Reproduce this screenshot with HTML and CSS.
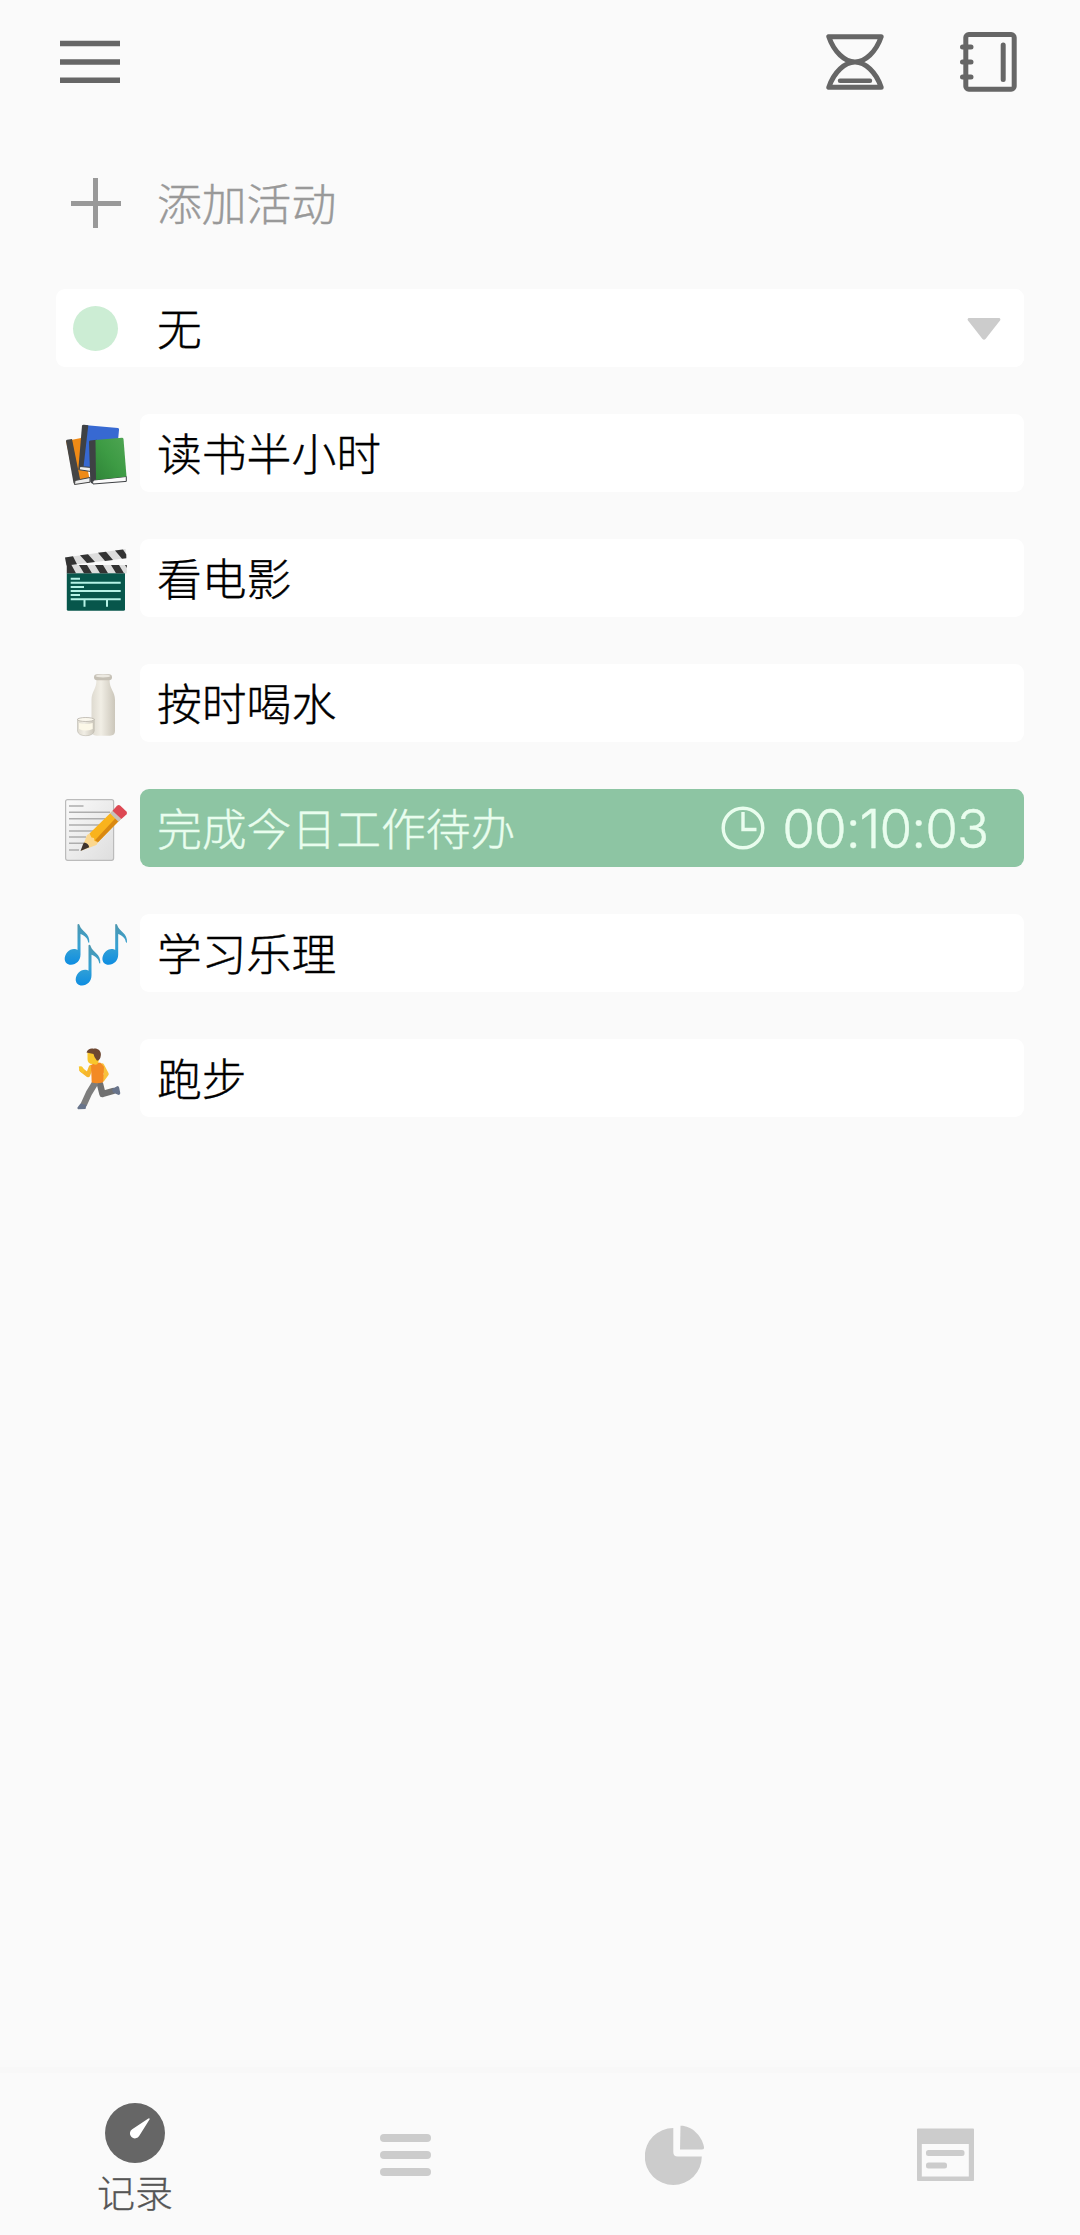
FILE: index.html
```html
<!DOCTYPE html>
<html lang="zh-CN">
<head>
  <meta charset="UTF-8" />
  <meta name="viewport" content="width=device-width, initial-scale=1.0"/>
  <title>记录</title>
  <link rel="stylesheet" href="styles.css">
</head>
<body>
  <header class="topbar">
    <svg class="menu-icon" viewBox="0 0 60 60" stroke="#666" stroke-width="5.5">
      <path d="M0 11.5h60M0 30h60M0 48.3h60"/>
    </svg>
    <div class="topbar-right">
      <svg class="top-icon" viewBox="0 0 60 60" fill="none" stroke="#666" stroke-width="5" stroke-linecap="round" stroke-linejoin="round">
        <path d="M3.8 4.7H56.2C51 20 40 30 30 30S9 20 3.8 4.7zM3.8 55.3H56.2C51 40 40 30 30 30S9 40 3.8 55.3z"/>
        <path d="M15 48.7H45" stroke-width="4.4"/>
      </svg>
      <svg class="top-icon" viewBox="0 0 60 60" fill="none" stroke="#666" stroke-width="5" stroke-linecap="round">
        <rect x="6.8" y="2.6" width="48.4" height="54.6" rx="3"/>
        <path d="M3.5 15h8.5M3.5 30h8.5M3.5 45h8.5M44.2 13v34.5"/>
      </svg>
    </div>
  </header>

  <main class="list">
    <div class="row add-row">
      <div class="icon-cell">
        <svg class="plus" viewBox="0 0 50 50" stroke="#999" stroke-width="5"><path d="M0 25.5h50M24.500 0v50"/></svg>
      </div>
      <div class="bar">添加活动</div>
    </div>

    <div class="row group-row">
      <div class="icon-cell"><span class="dot"></span></div>
      <div class="bar">
        <span>无</span>
        <svg class="caret" viewBox="0 0 34 22" fill="#ccc"><path d="M1.5 0h31q1.500 1 .5 2.500L18.500 21q-1.500 1.500-3 0L1 2.500Q0 1 1.500 0z"/></svg>
      </div>
    </div>

    <div class="row">
      <div class="icon-cell">
        <!-- books -->
        <svg class="emoji" viewBox="0 0 64 64">
          <defs>
            <linearGradient id="cover" x1="0" y1="1" x2="1" y2="0"><stop offset="0" stop-color="#2f8438"/><stop offset=".5" stop-color="#3d9b44"/><stop offset="1" stop-color="#4fa553"/></linearGradient>
          </defs>
          <path fill="#ef8a16" d="M2 18l15-3 9 43-15 3z"/>
          <path fill="#454545" d="M2 18q0-1 1-1.300l5-.7 8 40-5 5q-1 0-1.500-1z"/>
          <path fill="#eee" stroke="#454545" stroke-width="1" d="M11 57.500l15-3v4.700l-15.500 2.300z"/>
          <path fill="#3769d2" d="M20 2l34 3q1.500.5 1 2l-4 42-34-2z"/>
          <path fill="#3e4144" d="M18 2.500q.5-1 2-.8l4.300.6-5 43.500-5 1z"/>
          <path fill="#eee" stroke="#3e4144" stroke-width="1" d="M16 43.500l12 1v4.200l-13-2z"/>
          <path fill="#3e4144" d="M26 17.600l7-.8 3 42-8 1.700q-1.400-.3-1.700-2L25 19q0-1.200 1-1.400z"/>
          <path fill="#fafafa" stroke="#3e4144" stroke-width="1" d="M30 57l32.300-3.500v4.900L29 61q-1.500-2 1-4z"/>
          <path fill="url(#cover)" d="M31.500 17L58 14.700q1.300 0 1.500 1.300l3 37.500-30.500 3.400z"/>
        </svg>
      </div>
      <div class="bar">读书半小时</div>
    </div>

    <div class="row">
      <div class="icon-cell">
        <!-- clapper board -->
        <svg class="emoji" viewBox="0 0 64 64">
          <rect x="2.800" y="24" width="58.200" height="38.700" rx="1.500" fill="#07564b"/>
          <path fill="#ddd" d="M1 9.500L61.500 1l.8 9.300L2.500 17.500z"/>
          <path fill="#333" d="M1 9.500l8-1.200 4 7.900-10.500 1.300zM16 7.300l8-1.100 7 7.900-8 1zM34 4.800l8-1.100 7 8.200-8 1zM51 2.500l8-1.100 3.300 5.200v3.700l-4.300.5z"/>
          <rect x="2.800" y="17" width="60" height="8.300" fill="#ddd"/>
          <path fill="#333" d="M2.800 17h4.700l4.500 8.300H2.800zM15 17h8l5 8.300h-8zM31 17h8l5 8.300h-8zM47 17h8l5 8.300h-8zM61 17h1.800v3z"/>
          <path stroke="#b5f2e6" stroke-width="2" d="M6.700 30.700H16M6.700 34.700h50M6.700 39H20M6.700 43h50M6.700 47H16M6.700 51.300h50M20.500 51v7.700M43 51v7.700"/>
        </svg>
      </div>
      <div class="bar">看电影</div>
    </div>

    <div class="row">
      <div class="icon-cell">
        <!-- bottle and cup -->
        <svg class="emoji" viewBox="0 0 64 64">
          <defs>
            <linearGradient id="milk"><stop offset="0" stop-color="#dedad0"/><stop offset=".4" stop-color="#f1eee5"/><stop offset="1" stop-color="#cbc6ba"/></linearGradient>
          </defs>
          <path fill="url(#milk)" d="M32.500 6h13c0 11 5.500 12 5.500 21v31q0 4.500-5 4.700H32.500q-5-.2-5-4.700V27c0-9 5-10 5-21z"/>
          <rect x="30" y="1.200" width="18" height="6" rx="3" fill="#c5c0b5"/>
          <ellipse cx="39" cy="3" rx="7.500" ry="1.400" fill="#ece9e1"/>
          <path fill="url(#milk)" stroke="#bcb8ae" stroke-width=".6" d="M13.500 46h16.700v12q-1 4.700-8.400 4.700T13.500 58z"/>
          <ellipse cx="21.800" cy="46.500" rx="8.300" ry="2" fill="#faf7ed" stroke="#b7b3a9" stroke-width=".8"/>
          <path fill="#fcf8e8" d="M15 50q7 2 13.700 0v6q-7 3-13.700 0z"/>
        </svg>
      </div>
      <div class="bar">按时喝水</div>
    </div>

    <div class="row active">
      <div class="icon-cell">
        <!-- memo -->
        <svg class="emoji" viewBox="0 0 64 64">
          <defs>
            <linearGradient id="paper" x2="1" y2="1"><stop offset="0" stop-color="#fafafa"/><stop offset="1" stop-color="#dedede"/></linearGradient>
          </defs>
          <rect x="1.600" y="1.600" width="48" height="60.700" rx="2" fill="url(#paper)" stroke="#bbb" stroke-width="1.200"/>
          <path stroke="#adadad" stroke-width="1.500" d="M5 8h14.500M5 14.300h41M5 20.700h36M5 27h30M5 33h24M5 39h17M5 45.300h14M5 52h10"/>
          <path fill="#f9b31d" d="M25.500 35.500L48.500 13l8.200 8-23.500 24-6-2z"/>
          <path fill="#d98912" d="M53.500 18l3.200 3-23.500 24-2-3z"/>
          <path fill="#fbd78e" d="M17 52.700L23 37l2.500-1.500 2 4 2.500.5.500 3 3.500 1-1.500 3z"/>
          <path fill="#3f342e" d="M16.500 53l3.200-8.500q5 .5 5.500 4.800z"/>
          <path fill="#c7c0bb" d="M46 15.300l3-2.800 8.400 8.300-3 2.900z"/>
          <path fill="#dd4853" d="M48.500 12.700l4.500-5q1.700-1.500 3.400 0l6 5.700q1.300 1.500 0 3l-5 4.700z"/>
        </svg>
      </div>
      <div class="bar">
        <span>完成今日工作待办</span>
        <div class="timer">
          <svg class="clock" viewBox="0 0 44 44" fill="none" stroke="#e9fdee" stroke-width="3.400">
            <circle cx="22" cy="22" r="19.800"/>
            <path d="M22 6v17.500h13.500"/>
          </svg>
          <span class="time">00:10:03</span>
        </div>
      </div>
    </div>

    <div class="row">
      <div class="icon-cell">
        <!-- notes -->
        <svg class="emoji" viewBox="0 0 64 64">
          <defs>
            <linearGradient id="note" x2="0" y2="1"><stop offset="0" stop-color="#4d96ae"/><stop offset=".55" stop-color="#36a2d4"/><stop offset="1" stop-color="#0d8de2"/></linearGradient>
          </defs>
          <path id="n" fill="url(#note)" d="M13.500 2q0-1.200 1-1t1.200 1.500c1.500 5.500 10.500 8 9.600 17q-.8.500-1.200-.5c-.6-4.500-4-6.500-7.600-8v20.500c0 6-4.500 10.300-9.500 10.300-4 0-6.300-2.600-6.300-6 0-5 4.300-9.800 9.300-9.800 1.500 0 2.500.3 3.500 1z"/>
          <use href="#n" x="37.700"/>
          <use href="#n" x="11" y="20.800"/>
        </svg>
      </div>
      <div class="bar">学习乐理</div>
    </div>

    <div class="row">
      <div class="icon-cell">
        <!-- runner -->
        <svg class="emoji" viewBox="0 0 64 64">
          <g fill="none" stroke-linecap="round" stroke-linejoin="round">
            <path stroke="#707070" stroke-width="6.500" d="M36 36l2.500 10L49 43"/>
            <path stroke="#7d7d7d" stroke-width="6.500" d="M30.500 36l-5.500 9-5 11"/>
            <path stroke="#f6b62d" stroke-width="4.500" d="M27 19l-3 8-6.500-5"/>
            <path stroke="#f9c23c" stroke-width="4.500" d="M38 17.500l4.500 8.500-4 5.500"/>
          </g>
          <path fill="#f9c62c" d="M14.800 18.500q3-1 4 1l2 3.500-2 2-3.500-3z"/>
          <path fill="#f38a24" d="M27 17q4-3.500 9.500-2.300l3.500 4-.8 15.600q-6 1.700-11.500.2z"/>
          <path fill="#f9c62c" d="M23.500 4h9.500l2 8-1.500 4q-2 1.500-4 0-6 .5-6-5z"/>
          <path fill="#6d4731" d="M22.500 4.500c1-4 5-4.500 7-3.800 4-.8 8 2 7.300 6.800-.3 3.500-1.800 5-3.800 5.200L30.500 9l-1-3z"/>
          <path fill="#68748b" d="M16.500 55.500l6 1.500-1 4-7.500.3q-1.500-1.300 0-2.500zM48 41l5.500-3q2 .5 1.800 2.300l1 5q-.5 2-2.300 1.500l-5-2.300z"/>
        </svg>
      </div>
      <div class="bar">跑步</div>
    </div>
  </main>

  <nav class="tabbar">
    <div class="tab tab-current">
      <svg class="tab-icon" viewBox="0 0 60 60">
        <circle cx="30" cy="30" r="30" fill="#666"/>
        <path fill="#fff" d="M44.500 15.500q.5.300 0 1L34.300 32.800A5 5 0 1 1 27.200 26.200L43 15.700q1-.7 1.500-.2z"/>
      </svg>
      <span class="tab-label">记录</span>
    </div>
    <div class="tab">
      <svg class="tab-icon" viewBox="0 0 60 60" fill="#ccc">
        <rect x="5" y="9" width="51" height="8" rx="4"/>
        <rect x="5" y="26" width="51" height="8" rx="4"/>
        <rect x="5" y="43" width="51" height="8" rx="4"/>
      </svg>
    </div>
    <div class="tab">
      <svg class="tab-icon" viewBox="0 0 60 60" fill="#ccc">
        <path d="M28.300 3v24q0 4.500 4.500 4.500h24A28.500 28.500 0 1 1 28.300 3z"/>
        <path d="M35.500.8C46 .5 56.500 10 59 22q.3 2.500-2 2.500H35z"/>
      </svg>
    </div>
    <div class="tab">
      <svg class="tab-icon" viewBox="0 0 60 60" fill="#ccc">
        <path fill-rule="evenodd" d="M3 3.500h55q1 0 1 1v50.500q0 1-1 1H3q-1 0-1-1v-50.500q0-1 1-1zM6.800 19v32.500h47V19z"/>
        <rect x="11" y="25" width="38.500" height="6" rx="2.500"/>
        <rect x="11" y="37.500" width="21" height="6" rx="2.500"/>
      </svg>
    </div>
  </nav>
</body>
</html>
```
FILE: styles.css
```css
* {
  box-sizing: border-box;
}

body {
  font-family: 'Noto Sans CJK SC', sans-serif;
  font-weight: 300;
  margin: 0;
  min-height: 2235px;
  background: #fafafa;
  color: #000;
  display: flex;
  flex-direction: column;
}

svg {
  display: block;
  flex: none;
}

.topbar {
  height: 124px;
  padding: 0 61px 0 60px;
  display: flex;
  justify-content: space-between;
  align-items: center;
}

.topbar-right {
  display: flex;
  gap: 74px;
}

.menu-icon,
.top-icon {
  width: 60px;
  height: 60px;
}

.list {
  flex: 1;
  padding: 40px 56px 0;
  display: flex;
  flex-direction: column;
  gap: 47px;
}

.row {
  display: flex;
  align-items: center;
  height: 78px;
}

.icon-cell {
  width: 80px;
  margin-right: 4px;
  display: flex;
  justify-content: center;
}

.emoji {
  width: 64px;
  height: 64px;
  margin-top: 4px;
}

.bar {
  flex: 1;
  height: 78px;
  padding: 0 36px 0 17px;
  border-radius: 9px;
  background: #fff;
  font-size: 44.8px;
  line-height: 76px;
  -webkit-text-stroke: 0.4px;
  display: flex;
  justify-content: space-between;
}

.add-row .bar {
  background: none;
  color: #999;
}

.group-row {
  background: #fff;
  border-radius: 9px;
}

.group-row .bar {
  padding-right: 23px;
}

.plus {
  width: 50px;
  height: 50px;
}

.dot {
  width: 45px;
  height: 45px;
  margin-right: 1px;
  border-radius: 50%;
  background: #ccedd4;
}

.caret {
  width: 34px;
  height: 22px;
  margin-top: 29px;
}

.active .bar {
  background: #8dc5a3;
  color: #e9fdee;
}

.timer {
  display: flex;
  align-items: center;
  gap: 17px;
}

.clock {
  width: 44px;
  height: 44px;
}

.time {
  font-family: 'Inter', sans-serif;
  font-size: 53px;
  line-height: 78px;
  letter-spacing: -1px;
  font-feature-settings: "calt" 0;
  padding-top: 2px;
}

.tabbar {
  height: 168px;
  border-top: 6px solid #f8f8f8;
  display: flex;
}

.tab {
  flex: 1;
  padding-top: 2px;
  display: flex;
  flex-direction: column;
  align-items: center;
  justify-content: center;
}

.tab-current {
  justify-content: flex-start;
  padding-top: 30px;
}

.tab-icon {
  width: 60px;
  height: 60px;
}

.tab-label {
  margin-top: 3px;
  font-size: 38px;
  line-height: 50px;
  color: #555;
  -webkit-text-stroke: 0.3px;
}
```
